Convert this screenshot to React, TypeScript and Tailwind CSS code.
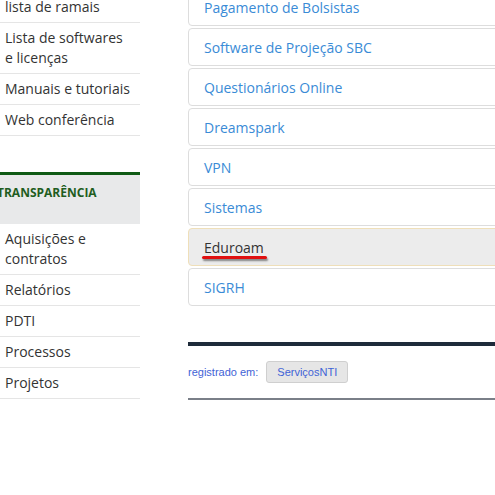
const sideTop = [
  "lista de ramais",
  "Lista de softwares\ne licenças",
  "Manuais e tutoriais",
  "Web conferência",
];

const sideTransparencia = [
  "Aquisições e\ncontratos",
  "Relatórios",
  "PDTI",
  "Processos",
  "Projetos",
];

const services = [
  "Pagamento de Bolsistas",
  "Software de Projeção SBC",
  "Questionários Online",
  "Dreamspark",
  "VPN",
  "Sistemas",
  "Eduroam",
  "SIGRH",
];

function SideItem({ label }: { label: string }) {
  return (
    <li className="whitespace-pre-line border-b border-b-[#e5e5e5] px-[5px] py-[5px] text-[14px] leading-[20px] text-[#333]">
      {label}
    </li>
  );
}

export default function App() {
  return (
    <div className="flex h-[495px] w-[495px] overflow-hidden bg-white font-['Open_Sans',sans-serif]">
      <aside className="mt-[-8px] w-[140px] shrink-0">
        <ul>
          {sideTop.map((item) => (
            <SideItem key={item} label={item} />
          ))}
        </ul>

        <h3 className="-ml-[3px] mt-[36px] h-[52px] border-t-[3px] border-t-[#0f5a14] bg-[#e8e9ea] pt-[9px] text-[12px] font-bold leading-[17px] text-[#1f5d1f]">
          TRANSPARÊNCIA
        </h3>
        <ul>
          {sideTransparencia.map((item) => (
            <SideItem key={item} label={item} />
          ))}
        </ul>
      </aside>

      <main className="ml-[48px] mt-[-12px] w-[330px] shrink-0">
        <ul className="flex flex-col gap-[2px]">
          {services.map((name) => {
            const active = name === "Eduroam";
            return (
              <li
                key={name}
                className={
                  active
                    ? "flex h-[38px] items-center rounded-[4px] border border-[#efdfb9] bg-[#ececec] px-[15px] text-[14px] text-[#333]"
                    : "flex h-[38px] items-center rounded-[4px] border border-[#dddddd] bg-white px-[15px] text-[14px] text-[#3a8bd6]"
                }
              >
                {active ? (
                  <span className="relative">
                    {name}
                    <span className="absolute left-[-2px] right-[-3px] top-[19px] h-[3px] rounded-full bg-[#e01010] shadow-[1px_2px_2px_rgba(0,0,0,0.45)]" />
                  </span>
                ) : (
                  name
                )}
              </li>
            );
          })}
        </ul>

        <div className="mt-[36px] h-[4px] bg-[#1e2b3a]" />

        <div className="flex items-center py-[15px] font-['Liberation_Sans',Arial,sans-serif] text-[11px] text-[#3f63d6]">
          <span>registrado em:</span>
          <span className="ml-[8px] flex h-[22px] items-center rounded-[3px] border border-[#cfcfcf] bg-[#e6e6e6] px-[10px] text-[11px]">
            ServiçosNTI
          </span>
        </div>
        <div className="h-[2px] bg-[#7a7f88]" />
      </main>
    </div>
  );
}
